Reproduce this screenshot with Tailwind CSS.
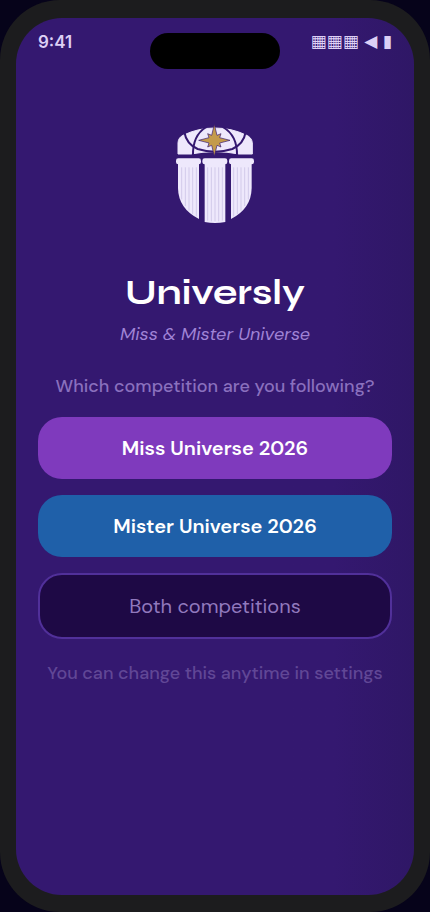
<!DOCTYPE html>
<html lang="en">
<head>
<meta charset="utf-8">
<meta name="viewport" content="width=device-width, initial-scale=1">
<title>Universly</title>
<script src="https://cdn.jsdelivr.net/npm/@tailwindcss/browser@4"></script>
</head>
<body class="bg-[#06031a] font-['DM_Sans','Open_Sans',sans-serif]">
<div class="flex min-h-screen flex-col rounded-[60px] bg-[#1c1c1e] px-4 pt-[18px] pb-[17px]">
  <div class="flex grow flex-col rounded-[46px] bg-linear-to-r from-[#341870] from-80% to-[#2f1766] px-[22px]">
    <header class="grid grid-cols-[1fr_auto_1fr] items-start pt-[15px] text-[#dccff5]">
      <span class="font-['Inter',sans-serif] text-[17px] leading-[18px] font-semibold">9:41</span>
      <div class="h-9 w-[130px] rounded-full bg-black"></div>
      <span class="justify-self-end font-['DejaVu_Sans',sans-serif] text-[17px] leading-4 whitespace-nowrap" aria-label="Signal and battery">▦▦▦ ◀ ▮</span>
    </header>
    <main class="flex flex-col items-center pt-[54px] text-center">
      <svg class="h-[104px] w-20" viewBox="30 25 240 312" role="img" aria-label="Universly crest">
        <path d="M39 118V84Q40 68 56 61Q100 40 149 40Q200 40 243 61Q260 68 262 84V118H222Q150 104 78 118Z" fill="#eee8fc" stroke="#eee8fc" stroke-width="3" stroke-linejoin="round"/>
        <g fill="none" stroke="#341870" stroke-width="6">
          <path d="M58 52Q64 88 98 103Q150 119 202 103Q236 88 242 52"/>
          <path d="M124 37Q82 62 84 124M173 37Q218 62 216 124"/>
        </g>
        <path d="M148 29L156 62L168 57L164 69L195 77L164 85L168 97L156 92L148 125L140 92L128 97L132 85L101 77L132 69L128 57L140 62Z" fill="#c49b4b" stroke="#341870" stroke-width="2"/>
        <g fill="#eee8fc">
          <rect x="33" y="131" width="75" height="18" rx="7"/>
          <rect x="112" y="131" width="75" height="18" rx="7"/>
          <rect x="192" y="131" width="75" height="18" rx="7"/>
          <path d="M39 148H102V313Q40 282 39 220Z"/>
          <path d="M119 148H181V322Q150 328 119 322Z"/>
          <path d="M198 148H260V220Q259 282 198 313Z"/>
        </g>
        <path d="M50 158V254M61 158V274M72 158V288M83 158V298M94 158V305M128 158V318M139 158V320M150 158V320M161 158V320M172 158V318M206 158V305M217 158V298M228 158V288M239 158V274M250 158V254" stroke="#d2caea" stroke-width="3"/>
      </svg>
      <h1 class="mt-[46px] font-['Syne','Inter',sans-serif] text-4xl font-bold text-white">Universly</h1>
      <p class="mt-[9px] text-lg leading-6 text-[#a083d6] italic">Miss &amp; Mister Universe</p>
      <p class="mt-7 text-lg leading-6 font-medium text-[#8a70be]">Which competition are you following?</p>
      <div class="mt-[19px] flex w-full flex-col gap-4 text-xl leading-7">
        <button type="button" class="w-full rounded-3xl bg-[#7f3abd] py-[17px] font-semibold text-white">Miss Universe 2026</button>
        <button type="button" class="w-full rounded-3xl bg-[#1f60a9] py-[17px] font-semibold text-white">Mister Universe 2026</button>
        <button type="button" class="w-full rounded-3xl border-2 border-[#51309a] bg-[#1e0945] py-[17px] text-[#9179bd]">Both competitions</button>
      </div>
      <p class="mt-[22px] text-lg leading-6 font-medium text-[#614796]">You can change this anytime in settings</p>
    </main>
  </div>
</div>
</body>
</html>
